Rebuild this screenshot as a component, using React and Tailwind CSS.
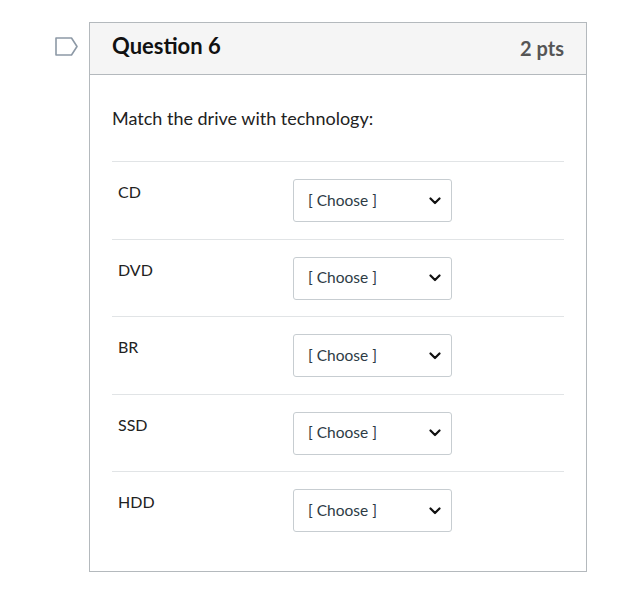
import React from 'react';

const drives = ['CD', 'DVD', 'BR', 'SSD', 'HDD'];

function Flag() {
  return (
    <svg width="23" height="19" viewBox="0 0 23 19" className="mt-[15px] mr-[11px] shrink-0">
      <path d="M1 1 H16.5 L22 9.5 L16.5 18 H1 Z" fill="#fff" stroke="#8d99a6" strokeWidth="1.6" strokeLinejoin="round" />
    </svg>
  );
}

function ChooseSelect() {
  return (
    <div className="w-[159px] h-[43px] border border-[#c7cdd1] rounded-[3px] bg-white flex items-center justify-between pl-[14px] pr-[10px] mt-[17px]">
      <span className="text-[15.5px] text-[#2d3b45]">[ Choose ]</span>
      <svg width="12" height="8" viewBox="0 0 12 8">
        <path d="M1.5 1.5 L6 6 L10.5 1.5" fill="none" stroke="#111" strokeWidth="2.2" strokeLinecap="round" strokeLinejoin="round" />
      </svg>
    </div>
  );
}

export default function App() {
  return (
    <div className="w-[625px] h-[601px] bg-white pt-[22px] pl-[55px] flex items-start font-['Lato','Noto_Sans',sans-serif] text-[#2d3b45]">
      <Flag />
      <div className="w-[498px] h-[550px] border border-[#b4b9bd]">
        <div className="h-[52px] bg-[#f5f5f5] border-b border-[#b4b9bd] flex items-center justify-between pl-[22px] pr-[22px]">
          <h2 className="text-[22px] font-bold text-[#111] leading-[26px] mb-[5px]">Question 6</h2>
          <span className="text-[20px] font-bold text-[#555] leading-[24px] mb-[1px]">2 pts</span>
        </div>
        <div className="px-[22px]">
          <p className="text-[18px] text-[#222] mt-[32px] mb-[32px] leading-[22px]">Match the drive with technology:</p>
          {drives.map((d) => (
            <div key={d} className="h-[77.5px] border-t border-[#e1e4e6] flex items-start">
              <span className="w-[181px] pl-[6px] pt-[20px] text-[16px] text-[#222] leading-[20px]">{d}</span>
              <ChooseSelect />
            </div>
          ))}
        </div>
      </div>
    </div>
  );
}
